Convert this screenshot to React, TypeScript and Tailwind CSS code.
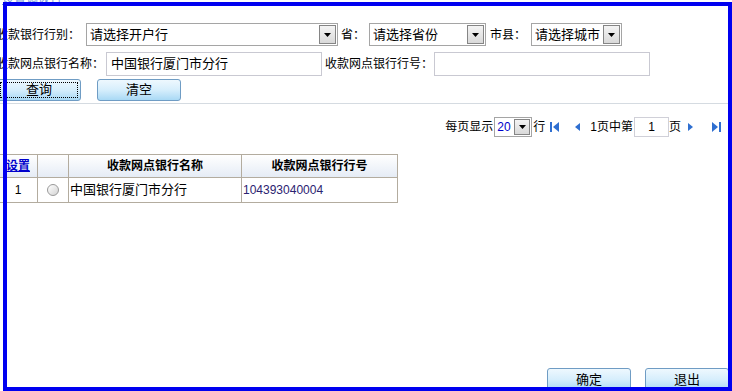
import { ReactNode } from 'react';

const font = { fontFamily: '"Liberation Sans", "Noto Sans CJK SC", sans-serif' };

function SelectBox({ width, text, textSize = 'text-[13px]' }: { width: number; text: string; textSize?: string }) {
  return (
    <div
      className="flex items-center h-[23px] border border-[#a5a5a5] bg-white pl-[3px] pr-[1px]"
      style={{ width }}
    >
      <span className={`flex-1 ${textSize} text-black leading-none whitespace-nowrap overflow-hidden`}>{text}</span>
      <DropButton />
    </div>
  );
}

function DropButton({ small = false }: { small?: boolean }) {
  return (
    <div
      className={`flex items-center justify-center border border-[#858585] bg-linear-to-b from-[#f4f4f4] to-[#d9d9d9] ${
        small ? 'w-[16px] h-[16px]' : 'w-[17px] h-[19px]'
      }`}
    >
      <svg width="7" height="4" viewBox="0 0 7 4">
        <path d="M0 0h7L3.5 4z" fill="#000" />
      </svg>
    </div>
  );
}

function Btn({ children, focus = false, className = '' }: { children: ReactNode; focus?: boolean; className?: string }) {
  return (
    <button
      className={`relative w-[84px] flex items-center justify-center rounded-[3px] border border-[#6f9cc4] bg-linear-to-b from-[#eef8fe] via-[#d6eefc] to-[#a9d9f5] text-[13px] text-black ${className}`}
    >
      {focus && <span className="absolute inset-[2px] border border-dotted border-black" />}
      {children}
    </button>
  );
}

function PageIcon({ kind }: { kind: 'first' | 'prev' | 'next' | 'last' }) {
  const fill = '#2f6fd0';
  return (
    <svg width="12" height="12" viewBox="0 0 12 12">
      {kind === 'first' && (
        <>
          <rect x="1" y="1" width="2" height="10" fill={fill} />
          <path d="M10 1v10L4 6z" fill={fill} />
        </>
      )}
      {kind === 'prev' && <path d="M10 2v8L5 6z" fill={fill} />}
      {kind === 'next' && <path d="M2 2v8l5-4z" fill={fill} />}
      {kind === 'last' && (
        <>
          <path d="M2 1v10l6-5z" fill={fill} />
          <rect x="9" y="1" width="2" height="10" fill={fill} />
        </>
      )}
    </svg>
  );
}

export default function App() {
  return (
    <div className="relative w-[732px] h-[391px] overflow-hidden bg-white text-[12px] text-black" style={font}>
      <div className="flex flex-col h-full">
        <div className="h-[12px] -mt-[7px] ml-[2px] leading-[12px] text-[12px] text-[#7d9ee0] underline">设置调拨行</div>

        <div className="flex items-center mt-[18px] -ml-[4px] h-[23px]">
          <span className="w-[90px] whitespace-nowrap">收款银行行别：</span>
          <SelectBox width={252} text="请选择开户行" />
          <span className="ml-[3px] w-[28px] whitespace-nowrap">省：</span>
          <SelectBox width={117} text="请选择省份" />
          <span className="ml-[4px] w-[41px] whitespace-nowrap">市县：</span>
          <SelectBox width={91} text="请选择城市" />
        </div>

        <div className="flex items-center mt-[6px] -ml-[4px] h-[24px]">
          <span className="w-[110px] whitespace-nowrap">收款网点银行名称：</span>
          <div className="w-[216px] h-[24px] border border-[#c9c9d2] flex items-center pl-[4px] text-[13px]">中国银行厦门市分行</div>
          <span className="ml-[3px] w-[109px] whitespace-nowrap">收款网点银行行号：</span>
          <div className="w-[216px] h-[24px] border border-[#c9c9d2]" />
        </div>

        <div className="flex mt-[3px] -ml-[3px] h-[22px] gap-[16px]">
          <Btn focus>查询</Btn>
          <Btn>清空</Btn>
        </div>

        <div className="mt-[2px] h-px bg-[#d5dbe1]" />

        <div className="flex items-center justify-end mt-[13px] h-[20px] pr-[10px]">
          <span className="whitespace-nowrap">每页显示</span>
          <div className="ml-[1px] flex items-center w-[38px] h-[20px] border border-[#a5a5a5] pl-[2px] pr-px">
            <span className="flex-1 text-[12px] text-[#0000cc] leading-none">20</span>
            <DropButton small />
          </div>
          <span className="ml-[1px]">行</span>
          <span className="ml-[4px]"><PageIcon kind="first" /></span>
          <span className="ml-[9px]"><PageIcon kind="prev" /></span>
          <span className="ml-[8px] whitespace-nowrap">1页中第</span>
          <div className="ml-[1px] w-[35px] h-[20px] border border-[#d0d0d8] flex items-center justify-center">1</div>
          <span>页</span>
          <span className="ml-[5px]"><PageIcon kind="next" /></span>
          <span className="ml-[12px]"><PageIcon kind="last" /></span>
        </div>

        <table className="mt-[17px] -ml-[2px] border-collapse w-[399px] table-fixed">
          <colgroup>
            <col className="w-[39px]" />
            <col className="w-[31px]" />
            <col className="w-[173px]" />
            <col className="w-[156px]" />
          </colgroup>
          <thead>
            <tr className="h-[23px] bg-linear-to-b from-white to-[#e4ebf5]">
              <th className="border border-[#b3ac9f] font-bold text-[#0000cc] underline">设置</th>
              <th className="border border-[#b3ac9f]" />
              <th className="border border-[#b3ac9f] font-bold">收款网点银行名称</th>
              <th className="border border-[#b3ac9f] font-bold">收款网点银行行号</th>
            </tr>
          </thead>
          <tbody>
            <tr className="h-[25px]">
              <td className="border border-[#b3ac9f] text-center">1</td>
              <td className="border border-[#b3ac9f]">
                <div className="mx-auto w-[12px] h-[12px] rounded-full border border-[#9a9a9a] bg-linear-to-br from-white to-[#d4d4d4]" />
              </td>
              <td className="border border-[#b3ac9f] pl-px text-[13px]">中国银行厦门市分行</td>
              <td className="border border-[#b3ac9f] pl-px text-[#2b2270]">104393040004</td>
            </tr>
          </tbody>
        </table>

        <div className="mt-auto flex justify-end gap-[14px] pr-[3px] h-[23px]">
          <Btn>确定</Btn>
          <Btn>退出</Btn>
        </div>
      </div>

      <div className="absolute left-[3px] top-[2px] right-0 bottom-0 border-[4px] border-[#0000f0] pointer-events-none" />
    </div>
  );
}
